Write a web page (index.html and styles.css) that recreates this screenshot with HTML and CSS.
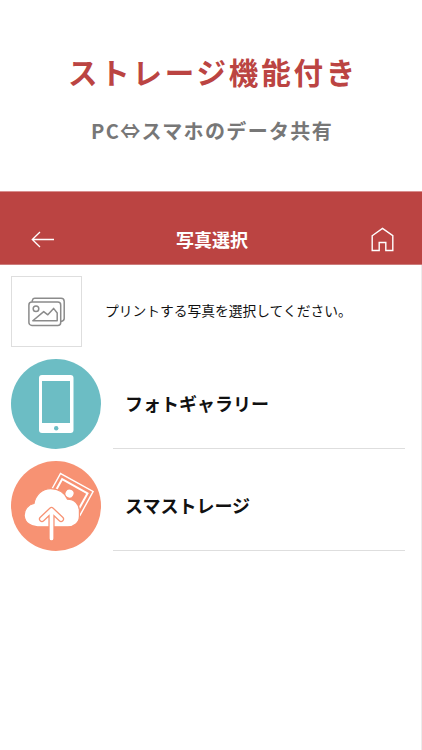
FILE: index.html
```html
<!DOCTYPE html>
<html lang="ja">
<head>
<meta charset="utf-8">
<title>写真選択</title>
<link rel="stylesheet" href="styles.css">
</head>
<body>
<header class="promo">
  <h1 class="promo-title">ストレージ機能付き</h1>
  <p class="promo-sub">PC<span class="arrow">⇔</span>スマホのデータ共有</p>
</header>
<main class="app">
  <nav class="bar">
    <svg class="back" viewBox="0 0 24 18" fill="none" stroke="#fff" stroke-width="1.3"><path d="M23 9.5H1M9 2L1.3 9.5L9 17"/></svg>
    <h2 class="bar-title">写真選択</h2>
    <svg class="home" viewBox="0 0 24 26" fill="none" stroke="#fff" stroke-width="1.4"><path d="M1.2 9.7L11.5 2.4L21.8 9.7V24.5H14.8V16.5H8.2V24.5H1.2Z"/></svg>
  </nav>
  <section class="content">
    <div class="intro">
      <div class="thumb">
        <svg class="photos" viewBox="0 0 38 30" fill="none" stroke="#8b8b8b" stroke-width="1.5" stroke-linejoin="round"><path d="M4 4.7L4.5 3Q4.9 1.3 6.8 1.3H33Q36.2 1.3 36.2 4.5V21.5Q36.2 24 32.8 24.5"/><rect x="0.9" y="5" width="31.8" height="23.4" rx="3"/><circle cx="8" cy="11.8" r="2.8"/><path d="M4.8 23.8L15.7 14.6L19.8 17.8L25.6 11.4L29.2 16V23.8Z"/></svg>
      </div>
      <p class="intro-text">プリントする写真を選択してください。</p>
    </div>
    <ul class="menu">
      <li class="item">
        <svg class="badge" viewBox="0 0 90 90"><circle cx="45" cy="45" r="45" fill="#6cbdc4"/><rect x="28" y="16" width="34.5" height="58" rx="3" fill="#fff"/><path d="M31 22H59V64H31Z" fill="#6cbdc4"/><circle cx="45.2" cy="69.2" r="2.2" fill="#6cbdc4"/></svg>
        <span class="label">フォトギャラリー</span>
      </li>
      <li class="item">
        <svg class="badge" viewBox="0 0 90 90"><circle cx="45" cy="45" r="45" fill="#f79273"/>
          <g transform="translate(49.5 12.5) rotate(29)" fill="none" stroke="#fff"><path d="M0 0H37.3V27H0Z" stroke-width="1.4"/><path d="M4.2 4.2H33.2V27H4.2Z" stroke-width="2"/><circle cx="17.6" cy="13.2" r="4" fill="#fff" stroke="none"/></g>
          <path d="M26.5 65.8C19.5 65.8 14 61.5 13.2 55C12.8 48.3 17.5 43.4 23 42.5C24.5 34 31 27.6 39.8 27.6C47.5 27.6 54 31.8 56.5 38.2C63.5 38.2 68.4 43.3 68.4 49.7V55.5C68.2 61.7 63.2 65.8 57 65.8Z" fill="#fff" stroke="#f79273" stroke-width="1.2"/>
          <path d="M40.5 77.5V51M31 58L40.5 49L50 58" fill="none" stroke="#f79273" stroke-width="6.2" stroke-linecap="round" stroke-linejoin="round"/>
          <path d="M40.5 77.5V51M31 58L40.5 49L50 58" fill="none" stroke="#fff" stroke-width="3.7" stroke-linecap="round" stroke-linejoin="round"/></svg>
        <span class="label">スマストレージ</span>
      </li>
    </ul>
  </section>
</main>
</body>
</html>
```
FILE: styles.css
```css
* { box-sizing: border-box; margin: 0; padding: 0; }
body {
  height: 750px;
  display: flex;
  flex-direction: column;
  overflow: hidden;
  background: #fff;
  color: #111;
  font-family: "Noto Sans CJK JP", sans-serif;
}
svg { display: block; flex: none; }
.promo { height: 191px; padding-top: 51px; text-align: center; white-space: nowrap; }
.promo-title {
  height: 40px;
  font-size: 29.5px;
  line-height: 40px;
  letter-spacing: 2.8px;
  padding-left: 4px;
  color: #bb4442;
}
.promo-sub {
  margin-top: 25px;
  padding-left: 2px;
  font-size: 20px;
  line-height: 30px;
  font-weight: 700;
  letter-spacing: 1.35px;
  color: #777;
}
.app { flex: 1; display: flex; flex-direction: column; }
.bar {
  height: 74px;
  padding: 22px 27px 0 31px;
  display: flex;
  align-items: center;
  background: #bb4442;
  border-top: 1px solid #d98f8e;
  border-bottom: 1px solid #cc7c7b;
}
.back { width: 24px; height: 18px; }
.bar-title { flex: 1; font-size: 18px; line-height: 24px; text-align: center; color: #fff; padding: 0 2px 1px 0; }
.home { width: 24px; height: 26px; }
.content { flex: 1; padding: 11px 16px 0 11px; border-right: 1px solid #ececec; }
.intro { display: flex; align-items: center; gap: 23px; }
.thumb {
  width: 71px;
  height: 71px;
  display: flex;
  align-items: center;
  justify-content: center;
  border: 1px solid #dedede;
}
.photos { width: 38px; height: 30px; }
.intro-text { padding-bottom: 3px; font-size: 13.75px; line-height: 20px; white-space: nowrap; }
.menu { list-style: none; margin-top: 12px; }
.item { height: 90px; margin-bottom: 12px; display: flex; gap: 12px; }
.badge { width: 90px; height: 90px; }
.label {
  flex: 1;
  padding-left: 12px;
  border-bottom: 1px solid #dedede;
  font-size: 18px;
  font-weight: 700;
  line-height: 89px;
  color: #111;
}
```
